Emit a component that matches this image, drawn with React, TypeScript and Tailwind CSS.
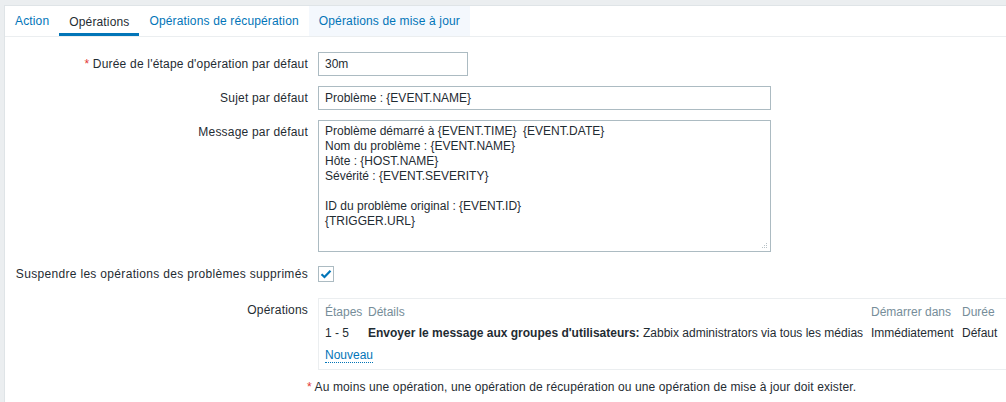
import React from "react";

const font = { fontFamily: '"Liberation Sans", Arial, sans-serif' };

function Row({ label, children, required, className = "", labelClass = "tracking-[0.2px]" }: { label?: React.ReactNode; children: React.ReactNode; required?: boolean; className?: string; labelClass?: string }) {
  return (
    <div className={"flex items-start " + className}>
      <div className={"w-[303px] shrink-0 text-right leading-[24px] whitespace-nowrap " + labelClass}>
        {required && <span className="text-[#e33734]">* </span>}
        {label}
      </div>
      <div className="ml-[10px] min-w-0 flex-1">{children}</div>
    </div>
  );
}

export default function App() {
  const message =
    "Problème démarré à {EVENT.TIME}  {EVENT.DATE}\nNom du problème : {EVENT.NAME}\nHôte : {HOST.NAME}\nSévérité : {EVENT.SEVERITY}\n\nID du problème original : {EVENT.ID}\n{TRIGGER.URL}";
  return (
    <div className="w-[1006px] h-[402px] overflow-hidden bg-[#ebeef0] pt-[5px] pl-[4px] text-[12px] text-[#1f2c33]" style={font}>
      <div className="h-[397px] bg-white border-l border-t border-[#dfe4e7]">
        {/* Tabs */}
        <div className="flex h-[31px] border-b border-[#ebeef0] tracking-[0.15px]">
          <div className="h-[30px] px-[10px] leading-[30px] text-[#0275b8]">Action</div>
          <div className="h-[30px] px-[10px] leading-[30px] border-b-[3px] border-[#0275b8] text-[#1f2c33]">
            <span className="relative top-[1px]">Opérations</span>
          </div>
          <div className="h-[30px] px-[10px] leading-[30px] text-[#0275b8]">Opérations de récupération</div>
          <div className="h-[30px] px-[10px] leading-[30px] text-[#0275b8] bg-[#f4f8fd]">Opérations de mise à jour</div>
        </div>

        <div className="pt-[15px]">
          <Row label="Durée de l'étape d'opération par défaut" required>
            <input
              readOnly
              defaultValue="30m"
              className="w-[150px] h-[24px] border border-[#acbbc2] px-[6px] text-[12px] text-[#1f2c33] outline-none"
              style={font}
            />
          </Row>
          <Row label="Sujet par défaut" className="mt-[10px]">
            <input
              readOnly
              defaultValue="Problème : {EVENT.NAME}"
              className="w-[453px] h-[24px] border border-[#acbbc2] px-[6px] text-[12px] text-[#1f2c33] outline-none"
              style={font}
            />
          </Row>
          <Row label="Message par défaut" className="mt-[10px]">
            <div className="relative w-[453px] h-[132px]">
              <textarea
                readOnly
                defaultValue={message}
                className="block w-[453px] h-[132px] border border-[#acbbc2] px-[6px] pt-[3px] text-[12px] leading-[15px] text-[#1f2c33] outline-none resize-none"
                style={font}
              />
              <svg className="absolute right-[3px] bottom-[3px]" width="7" height="7" viewBox="0 0 7 7">
                <rect x="5" y="1" width="1" height="1" fill="#b8c2c7" />
                <rect x="3" y="3" width="1" height="1" fill="#b8c2c7" />
                <rect x="5" y="3" width="1" height="1" fill="#b8c2c7" />
                <rect x="1" y="5" width="1" height="1" fill="#b8c2c7" />
                <rect x="3" y="5" width="1" height="1" fill="#b8c2c7" />
                <rect x="5" y="5" width="1" height="1" fill="#b8c2c7" />
              </svg>
            </div>
          </Row>
          <Row label="Suspendre les opérations des problèmes supprimés" className="mt-[10px]" labelClass="tracking-[0.32px]">
            <div className="h-[24px] flex items-center">
              <div className="w-[16px] h-[16px] border border-[#acbbc2] bg-white flex items-center justify-center">
                <svg width="12" height="10" viewBox="0 0 12 10">
                  <path d="M1.5 5.2 L4.5 8 L10.5 1.8" fill="none" stroke="#0275b8" strokeWidth="2.2" />
                </svg>
              </div>
            </div>
          </Row>
          <Row label="Opérations" className="mt-[12px]">
            <div className="w-[720px] border border-[#ebeef0] py-[3px]">
              <div className="grid grid-cols-[43px_503px_91px_1fr] leading-[20px] text-[#768d99]">
                <div className="pl-[6px]">Étapes</div>
                <div className="pl-[6px]">Détails</div>
                <div className="pl-[6px] whitespace-nowrap">Démarrer dans</div>
                <div className="pl-[6px]">Durée</div>
              </div>
              <div className="grid grid-cols-[43px_503px_91px_1fr] leading-[22px]">
                <div className="pl-[6px]">1 - 5</div>
                <div className="pl-[6px] whitespace-nowrap">
                  <span className="font-bold">Envoyer le message aux groupes d'utilisateurs:</span> Zabbix administrators via tous les médias
                </div>
                <div className="pl-[6px]">Immédiatement</div>
                <div className="pl-[6px]">Défaut</div>
              </div>
              <div className="leading-[22px] pl-[6px]">
                <span className="text-[#0275b8] border-b border-dotted border-[#0275b8] leading-[14px] inline-block">Nouveau</span>
              </div>
            </div>
          </Row>
          <div className="mt-[5px] pl-[302px] leading-[24px] whitespace-nowrap tracking-[0.12px]">
            <span className="text-[#e33734]">*</span> Au moins une opération, une opération de récupération ou une opération de mise à jour doit exister.
          </div>
        </div>
      </div>
    </div>
  );
}
